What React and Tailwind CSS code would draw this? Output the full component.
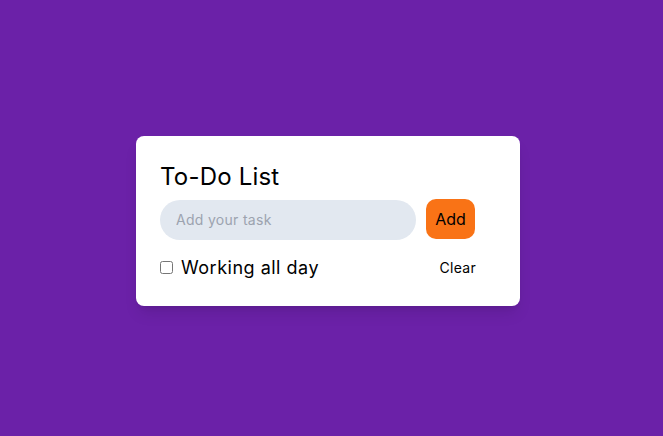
export default function App() {
  return (
    <div className="w-full h-[436px] bg-[#6b21a8] flex items-center justify-center" style={{ fontFamily: 'Inter, "Noto Sans", sans-serif' }}>
      <div className="w-[384px] bg-white rounded-lg shadow-lg pl-6 pr-11 pt-[25px] pb-[26px] mt-[5px] mr-[7px]">
        <h2 className="text-[24px] leading-[32px] text-black font-normal tracking-[0.2px]">To-Do List</h2>
        <div className="flex items-center mt-[7px]">
          <input
            type="text"
            placeholder="Add your task"
            className="w-[256px] h-10 rounded-full bg-[#e2e8f0] px-4 text-sm tracking-[0.3px] text-black placeholder:text-[#9ca3af] outline-none"
          />
          <button className="ml-[10px] w-[49px] h-10 rounded-[10px] bg-[#f97316] text-base text-black -mt-[2px]">Add</button>
        </div>
        <div className="flex items-center justify-between mt-[16px]">
          <label className="flex items-center">
            <input type="checkbox" className="w-[13px] h-[13px]" />
            <span className="ml-[8px] text-[18px] leading-6 text-black tracking-[0.5px]">Working all day</span>
          </label>
          <button className="text-sm text-black tracking-[0.3px]">Clear</button>
        </div>
      </div>
    </div>
  )
}
